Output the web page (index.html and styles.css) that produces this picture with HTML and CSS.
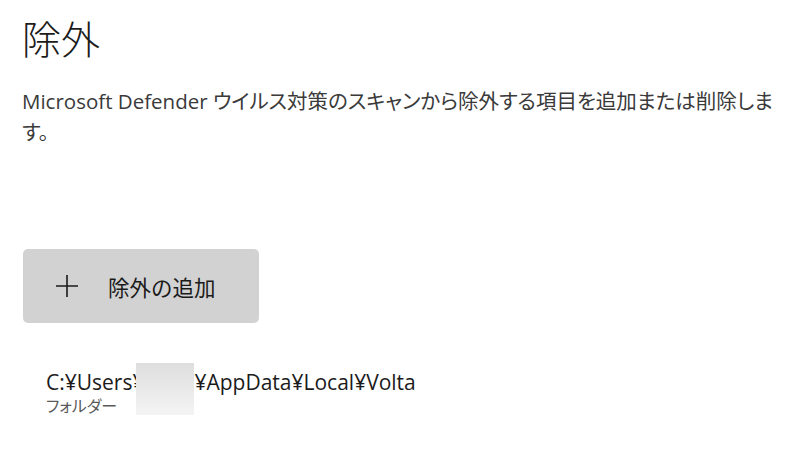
FILE: index.html
```html
<!DOCTYPE html>
<html lang="ja">
<head>
<meta charset="utf-8">
<title>除外</title>
<link rel="stylesheet" href="styles.css">
</head>
<body>
<main class="page">
  <h1 class="title">除外</h1>
  <p class="desc">Microsoft Defender ウイルス対策のスキャンから除外する項目を追加または削除します。</p>
  <button class="add-btn" type="button">
    <svg class="plus" width="22" height="22" viewBox="0 0 22 22" aria-hidden="true">
      <path d="M11 0v22M0 11h22" stroke="#1b1b1b" stroke-width="1.6" fill="none"/>
    </svg>
    <span class="add-label">除外の追加</span>
  </button>
  <div class="item">
    <div class="item-path">C:¥Users¥<span class="redact"></span>¥AppData¥Local¥Volta</div>
    <div class="item-type">フォルダー</div>
  </div>
</main>
</body>
</html>
```
FILE: styles.css
```css
html, body {
  margin: 0;
  padding: 0;
  background: #ffffff;
}
body {
  font-family: "Open Sans", "Noto Sans CJK JP", sans-serif;
  font-feature-settings: "palt";
  color: #1b1b1b;
}
.page {
  display: flex;
  flex-direction: column;
  align-items: flex-start;
  padding: 11px 22px 0 22px;
}
.title {
  margin: 0;
  font-family: "Noto Sans CJK JP", sans-serif;
  font-weight: 300;
  font-size: 39px;
  line-height: 52px;
  color: #1b1b1b;
}
.desc {
  margin: 23px 0 0 0;
  font-size: 20.5px;
  line-height: 31px;
  color: #3a3a3a;
  width: 762px;
}
.add-btn {
  margin: 101px 0 0 1px;
  width: 236px;
  height: 74px;
  border: none;
  border-radius: 5px;
  background: #d2d2d2;
  display: flex;
  align-items: center;
  padding: 0 0 0 33px;
  font-family: inherit;
  cursor: pointer;
}
.plus {
  display: block;
  flex: none;
}
.add-label {
  margin-left: 30px;
  font-size: 21.5px;
  color: #1b1b1b;
  font-family: "Noto Sans CJK JP", sans-serif;
}
.item {
  margin: 45px 0 0 24px;
  display: flex;
  flex-direction: column;
}
.item-path {
  font-size: 21px;
  line-height: 28px;
  color: #1b1b1b;
  white-space: nowrap;
}
.redact {
  position: relative;
  display: inline-block;
  width: 58px;
  height: 1px;
  margin-left: -8px;
}
.redact::after {
  content: "";
  position: absolute;
  left: 0;
  top: -26px;
  width: 58px;
  height: 52px;
  background: linear-gradient(#dedede, #f4f4f4);
}
.item-type {
  font-size: 16px;
  line-height: 20px;
  color: #5a5a5a;
}
```
